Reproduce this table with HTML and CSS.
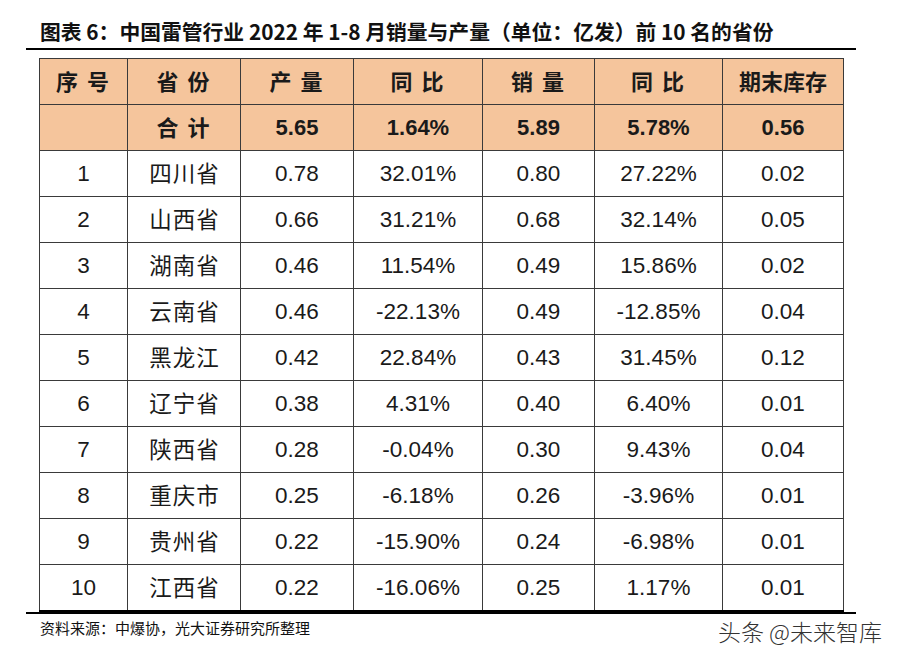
FILE: index.html
```html
<!DOCTYPE html>
<html lang="zh">
<head>
<meta charset="utf-8">
<link rel="stylesheet" href="styles.css">
</head>
<body>
<div class="page">
  <h1 class="title">图表 6：中国雷管行业 2022 年 1-8 月销量与产量（单位：亿发）前 10 名的省份</h1>
  <table class="data">
    <colgroup>
      <col class="c1"><col class="c2"><col class="c3"><col class="c4"><col class="c5"><col class="c6"><col class="c7">
    </colgroup>
    <thead>
      <tr class="head"><th>序 号</th><th>省 份</th><th>产 量</th><th>同 比</th><th>销 量</th><th>同 比</th><th class="tight">期末库存</th></tr>
      <tr class="total"><th></th><th>合 计</th><th class="num">5.65</th><th class="num">1.64%</th><th class="num">5.89</th><th class="num">5.78%</th><th class="num">0.56</th></tr>
    </thead>
    <tbody>
      <tr><td>1</td><td class="cjk">四川省</td><td>0.78</td><td>32.01%</td><td>0.80</td><td>27.22%</td><td>0.02</td></tr>
      <tr><td>2</td><td class="cjk">山西省</td><td>0.66</td><td>31.21%</td><td>0.68</td><td>32.14%</td><td>0.05</td></tr>
      <tr><td>3</td><td class="cjk">湖南省</td><td>0.46</td><td>11.54%</td><td>0.49</td><td>15.86%</td><td>0.02</td></tr>
      <tr><td>4</td><td class="cjk">云南省</td><td>0.46</td><td>-22.13%</td><td>0.49</td><td>-12.85%</td><td>0.04</td></tr>
      <tr><td>5</td><td class="cjk">黑龙江</td><td>0.42</td><td>22.84%</td><td>0.43</td><td>31.45%</td><td>0.12</td></tr>
      <tr><td>6</td><td class="cjk">辽宁省</td><td>0.38</td><td>4.31%</td><td>0.40</td><td>6.40%</td><td>0.01</td></tr>
      <tr><td>7</td><td class="cjk">陕西省</td><td>0.28</td><td>-0.04%</td><td>0.30</td><td>9.43%</td><td>0.04</td></tr>
      <tr><td>8</td><td class="cjk">重庆市</td><td>0.25</td><td>-6.18%</td><td>0.26</td><td>-3.96%</td><td>0.01</td></tr>
      <tr><td>9</td><td class="cjk">贵州省</td><td>0.22</td><td>-15.90%</td><td>0.24</td><td>-6.98%</td><td>0.01</td></tr>
      <tr><td>10</td><td class="cjk">江西省</td><td>0.22</td><td>-16.06%</td><td>0.25</td><td>1.17%</td><td>0.01</td></tr>
    </tbody>
  </table>
  <div class="footer">
    <span class="source">资料来源：中爆协，光大证券研究所整理</span>
    <span class="mark">头条 @未来智库</span>
  </div>
</div>
</body>
</html>
```

FILE: styles.css
```css
html, body {
  margin: 0;
  padding: 0;
  background: #ffffff;
}

.page {
  width: 830px;
  margin-left: 26px;
  padding-top: 19px;
}

.title {
  margin: 0;
  padding: 0 0 5px 14px;
  font-family: "Noto Sans CJK SC", "Noto Sans", sans-serif;
  font-weight: 700;
  font-size: 20.8px;
  line-height: 24px;
  color: #111;
  border-bottom: 2px solid #000;
  white-space: nowrap;
}

.data {
  margin: 8px 0 0 13px;
  width: 804px;
  border-collapse: collapse;
  table-layout: fixed;
  border-bottom: 2px solid #000;
}

.c1 { width: 88px; }
.c2 { width: 113px; }
.c3 { width: 113px; }
.c4 { width: 129px; }
.c5 { width: 112px; }
.c6 { width: 128px; }
.c7 { width: 121px; }

.data th, .data td {
  border: 1px solid #3a3a3a;
  height: 45px;
  padding: 0;
  line-height: 26px;
  text-align: center;
  vertical-align: middle;
}

.data th {
  background: #f5c59c;
  font-family: "Noto Sans CJK SC", sans-serif;
  font-weight: 700;
  font-size: 22px;
  color: #1a1a1a;
  letter-spacing: 2px;
  height: 42px;
  padding-bottom: 3px;
}

.data th.tight {
  letter-spacing: 0;
}

.data th.num {
  font-family: "Liberation Sans", Arial, sans-serif;
  letter-spacing: 0;
  height: 45px;
  padding-bottom: 0;
}

.data td {
  font-family: "Liberation Sans", Arial, sans-serif;
  font-size: 22.5px;
  color: #1a1a1a;
  background: #fff;
}

.data td.cjk {
  font-family: "Noto Sans CJK SC", sans-serif;
  font-size: 22.5px;
  letter-spacing: 1px;
  text-indent: 1px;
  height: 42px;
  padding-bottom: 3px;
}

.footer {
  display: flex;
  justify-content: space-between;
  align-items: flex-start;
  border-top: 2px solid #000;
  padding-left: 14px;
}

.source {
  font-family: "Noto Sans CJK SC", sans-serif;
  font-size: 15px;
  line-height: 20px;
  margin-top: 4px;
  color: #111;
}

.mark {
  font-family: "Noto Sans CJK SC", sans-serif;
  font-weight: 300;
  font-size: 23px;
  line-height: 28px;
  margin-top: 3px;
  margin-right: -26px;
  color: #333;
}
```
